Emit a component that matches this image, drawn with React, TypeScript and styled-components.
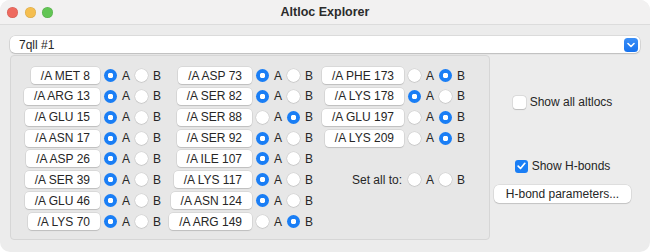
import React from "react";
import styled, { createGlobalStyle } from "styled-components";

const GlobalStyle = createGlobalStyle`
  html, body {
    margin: 0;
    padding: 0;
    background: #ffffff;
  }
  * {
    box-sizing: border-box;
  }
`;

type Choice = "A" | "B" | null;
type Cell = { res: string; pick: Choice } | { setAll: true } | null;

const col1: Cell[] = [
  { res: "/A MET 8", pick: "A" },
  { res: "/A ARG 13", pick: "A" },
  { res: "/A GLU 15", pick: "A" },
  { res: "/A ASN 17", pick: "A" },
  { res: "/A ASP 26", pick: "A" },
  { res: "/A SER 39", pick: "A" },
  { res: "/A GLU 46", pick: "A" },
  { res: "/A LYS 70", pick: "A" },
];
const col2: Cell[] = [
  { res: "/A ASP 73", pick: "A" },
  { res: "/A SER 82", pick: "A" },
  { res: "/A SER 88", pick: "B" },
  { res: "/A SER 92", pick: "A" },
  { res: "/A ILE 107", pick: "A" },
  { res: "/A LYS 117", pick: "A" },
  { res: "/A ASN 124", pick: "A" },
  { res: "/A ARG 149", pick: "B" },
];
const col3: Cell[] = [
  { res: "/A PHE 173", pick: "B" },
  { res: "/A LYS 178", pick: "A" },
  { res: "/A GLU 197", pick: "B" },
  { res: "/A LYS 209", pick: "B" },
  null,
  { setAll: true },
  null,
  null,
];

const Window = styled.div`
  width: 650px;
  height: 252px;
  background: #ececec;
  border-radius: 10px;
  overflow: hidden;
  font-family: "Liberation Sans", Arial, sans-serif;
  font-size: 12px;
  color: #262626;
  display: flex;
  flex-direction: column;
`;

const TitleBar = styled.div`
  position: relative;
  height: 25px;
  flex: none;
  background: #f2f1f1;
  border-bottom: 1px solid #dcdcdc;
  display: flex;
  align-items: center;
  justify-content: center;
`;

const Lights = styled.div`
  position: absolute;
  left: 7px;
  top: 7px;
  display: flex;
  gap: 6.5px;
`;

const Light = styled.span<{ $c: string }>`
  width: 11px;
  height: 11px;
  border-radius: 50%;
  background: ${(p) => p.$c};
  box-shadow: inset 0 0 0 0.5px rgba(0, 0, 0, 0.12);
`;

const Title = styled.div`
  font-weight: 700;
  font-size: 12.5px;
  color: #2b2b2b;
`;

const Body = styled.div`
  padding: 11px 10px 0 10px;
  display: flex;
  flex-direction: column;
  gap: 2px;
`;

const Combo = styled.div`
  height: 17px;
  background: #ffffff;
  border-radius: 5px;
  box-shadow: 0 0 0 0.5px rgba(0, 0, 0, 0.14), 0 1px 1.5px rgba(0, 0, 0, 0.14);
  display: flex;
  align-items: center;
  justify-content: space-between;
  padding: 0 2px 0 9px;
`;

const ComboArrow = styled.div`
  width: 14px;
  height: 14px;
  border-radius: 3.5px;
  background: linear-gradient(#3b8ff7, #1672ee);
  display: flex;
  align-items: center;
  justify-content: center;
`;

const Main = styled.div`
  display: flex;
`;

const Group = styled.div`
  width: 480px;
  height: 185px;
  background: #e7e7e7;
  border: 1px solid #d6d6d6;
  border-radius: 4px;
  padding: 11px 0 0 1px;
`;

const Grid = styled.div`
  display: grid;
  grid-template-columns: repeat(3, 88px 64px);
  grid-auto-rows: 17px;
  row-gap: 3.86px;
`;

const LabelSlot = styled.div`
  display: flex;
  justify-content: flex-end;
  align-items: center;
`;

const ResButton = styled.div`
  height: 17px;
  padding: 0 10px;
  background: #ffffff;
  border-radius: 4px;
  box-shadow: 0 0 0 0.5px rgba(0, 0, 0, 0.12), 0 1px 1px rgba(0, 0, 0, 0.12);
  display: flex;
  align-items: center;
  white-space: nowrap;
`;

const PlainLabel = styled.span`
  white-space: nowrap;
  padding-right: 2px;
`;

const RadioSlot = styled.div`
  display: flex;
  align-items: center;
  padding-left: 4px;
`;

const Radio = styled.span<{ $on: boolean }>`
  width: 13px;
  height: 13px;
  border-radius: 50%;
  flex: none;
  background: ${(p) =>
    p.$on
      ? "radial-gradient(circle, #ffffff 0 2.6px, #1a7ef5 3px)"
      : "#ffffff"};
  box-shadow: ${(p) =>
    p.$on
      ? "none"
      : "0 0 0 0.5px rgba(0,0,0,0.1), 0 0.5px 1px rgba(0,0,0,0.15)"};
`;

const RadioText = styled.span`
  margin: 0 5px 0 5px;
  width: 8px;
`;

const Side = styled.div`
  flex: 1;
  display: flex;
  flex-direction: column;
  align-items: center;
  padding-right: 5px;
`;

const CheckRow = styled.label<{ $top: number }>`
  margin-top: ${(p) => p.$top}px;
  display: flex;
  align-items: center;
  gap: 4px;
  white-space: nowrap;
`;

const Box = styled.span<{ $on: boolean }>`
  width: 13px;
  height: 13px;
  border-radius: 3px;
  flex: none;
  display: flex;
  align-items: center;
  justify-content: center;
  background: ${(p) => (p.$on ? "#1a7ef5" : "#ffffff")};
  box-shadow: ${(p) =>
    p.$on
      ? "none"
      : "0 0 0 0.5px rgba(0,0,0,0.12), 0 0.5px 1px rgba(0,0,0,0.15)"};
`;

const PushButton = styled.div`
  margin-top: 12px;
  width: 137px;
  height: 18px;
  background: #ffffff;
  border-radius: 5px;
  box-shadow: 0 0 0 0.5px rgba(0, 0, 0, 0.12), 0 1px 1px rgba(0, 0, 0, 0.12);
  display: flex;
  align-items: center;
  justify-content: center;
  white-space: nowrap;
`;

function Radios({ pick }: { pick: Choice }) {
  return (
    <RadioSlot>
      <Radio $on={pick === "A"} />
      <RadioText>A</RadioText>
      <Radio $on={pick === "B"} />
      <RadioText>B</RadioText>
    </RadioSlot>
  );
}

function CellView({ cell }: { cell: Cell }) {
  if (!cell) {
    return (
      <>
        <LabelSlot />
        <RadioSlot />
      </>
    );
  }
  if ("setAll" in cell) {
    return (
      <>
        <LabelSlot>
          <PlainLabel>Set all to:</PlainLabel>
        </LabelSlot>
        <Radios pick={null} />
      </>
    );
  }
  return (
    <>
      <LabelSlot>
        <ResButton>{cell.res}</ResButton>
      </LabelSlot>
      <Radios pick={cell.pick} />
    </>
  );
}

export default function App() {
  return (
    <>
      <GlobalStyle />
      <Window>
        <TitleBar>
          <Lights>
            <Light $c="#ee6a5f" />
            <Light $c="#f5be4f" />
            <Light $c="#62c554" />
          </Lights>
          <Title>Altloc Explorer</Title>
        </TitleBar>
        <Body>
          <Combo>
            <span>7qll #1</span>
            <ComboArrow>
              <svg width="8" height="6" viewBox="0 0 8 6">
                <path d="M1 1.5 L4 4.5 L7 1.5" fill="none" stroke="#fff" strokeWidth="1.6" strokeLinecap="round" strokeLinejoin="round" />
              </svg>
            </ComboArrow>
          </Combo>
          <Main>
            <Group>
              <Grid>
                {col1.map((_, i) => (
                  <React.Fragment key={i}>
                    <CellView cell={col1[i]} />
                    <CellView cell={col2[i]} />
                    <CellView cell={col3[i]} />
                  </React.Fragment>
                ))}
              </Grid>
            </Group>
            <Side>
              <CheckRow $top={40}>
                <Box $on={false} />
                <span>Show all altlocs</span>
              </CheckRow>
              <CheckRow $top={50}>
                <Box $on={true}>
                  <svg width="9" height="8" viewBox="0 0 9 8">
                    <path d="M1.2 4.2 L3.5 6.5 L7.8 1.3" fill="none" stroke="#fff" strokeWidth="1.7" strokeLinecap="round" strokeLinejoin="round" />
                  </svg>
                </Box>
                <span>Show H-bonds</span>
              </CheckRow>
              <PushButton>H-bond parameters...</PushButton>
            </Side>
          </Main>
        </Body>
      </Window>
    </>
  );
}
